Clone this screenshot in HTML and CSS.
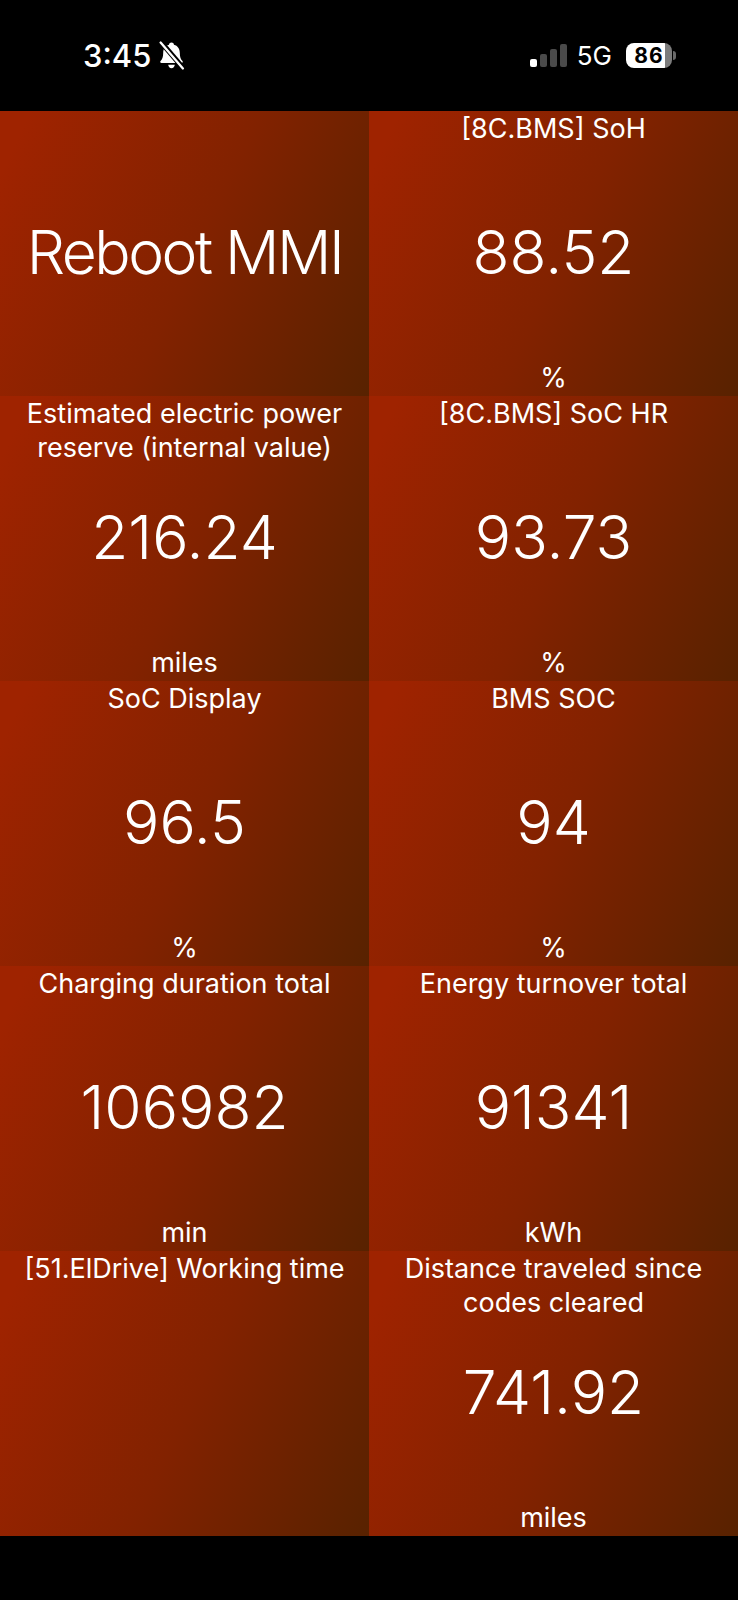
FILE: index.html
```html
<!DOCTYPE html>
<html lang="en">
<head>
    <meta charset="UTF-8">
    <meta name="viewport" content="width=device-width, initial-scale=1.0">
    <title>Dashboard</title>
    <link rel="stylesheet" href="styles.css">
</head>
<body>
    <header class="status-bar">
        <div class="status-left">
            <span class="time">3:45</span>
            <svg class="bell" viewBox="0 0 26 28" width="27" height="29">
                <path fill="#fff" d="M13 1.500c1.300 0 2.200.9 2.400 2 3.600.9 5.600 4 5.600 7.800 0 4.200 1 6.400 2.600 8 .7.8.2 2-.9 2H3.300c-1.100 0-1.600-1.200-.9-2C4 17.700 5 15.500 5 11.300c0-3.800 2-6.900 5.600-7.800.2-1.100 1.100-2 2.400-2zM9.800 23h6.400c-.2 1.900-1.500 3.300-3.200 3.300S10 24.900 9.800 23z"/>
                <path stroke="#000" stroke-width="5" d="M2 0l23 27"/>
                <path stroke="#fff" stroke-width="2.200" stroke-linecap="round" d="M2.500 1.500l21.500 25"/>
            </svg>
        </div>
        <div class="status-right">
            <div class="signal">
                <span class="bar bar-1 on"></span>
                <span class="bar bar-2"></span>
                <span class="bar bar-3"></span>
                <span class="bar bar-4"></span>
            </div>
            <span class="network">5G</span>
            <div class="battery"><span class="battery-level">86</span></div>
            <span class="battery-nub"></span>
        </div>
    </header>

    <main class="grid">
        <div class="tile">
            <div class="label"></div>
            <div class="value big">Reboot MMI</div>
            <div class="unit"></div>
        </div>
        <div class="tile">
            <div class="label">[8C.BMS] SoH</div>
            <div class="value">88.52</div>
            <div class="unit">%</div>
        </div>
        <div class="tile">
            <div class="label">Estimated electric power reserve (internal value)</div>
            <div class="value">216.24</div>
            <div class="unit">miles</div>
        </div>
        <div class="tile">
            <div class="label">[8C.BMS] SoC HR</div>
            <div class="value">93.73</div>
            <div class="unit">%</div>
        </div>
        <div class="tile">
            <div class="label">SoC Display</div>
            <div class="value">96.5</div>
            <div class="unit">%</div>
        </div>
        <div class="tile">
            <div class="label">BMS SOC</div>
            <div class="value">94</div>
            <div class="unit">%</div>
        </div>
        <div class="tile">
            <div class="label">Charging duration total</div>
            <div class="value">106982</div>
            <div class="unit">min</div>
        </div>
        <div class="tile">
            <div class="label">Energy turnover total</div>
            <div class="value">91341</div>
            <div class="unit">kWh</div>
        </div>
        <div class="tile">
            <div class="label">[51.ElDrive] Working time</div>
            <div class="value"></div>
            <div class="unit"></div>
        </div>
        <div class="tile">
            <div class="label">Distance traveled since codes cleared</div>
            <div class="value">741.92</div>
            <div class="unit">miles</div>
        </div>
    </main>
</body>
</html>
```

FILE: styles.css
```css
body {
    margin: 0;
    height: 1600px;
    background-color: #000;
    color: #fff;
    font-family: Inter, Roboto, sans-serif;
    overflow: hidden;
}

.status-bar {
    height: 111px;
    display: flex;
    justify-content: space-between;
    align-items: center;
    padding: 0 62px 1px 83px;
    box-sizing: border-box;
}
.status-left {
    display: flex;
    align-items: center;
    gap: 7px;
}
.time {
    font-size: 31px;
    font-weight: 500;
}
.status-right {
    display: flex;
    align-items: center;
}
.signal {
    display: flex;
    align-items: flex-end;
    gap: 3px;
    height: 23px;
    margin-right: 10px;
}
.bar {
    width: 7px;
    background-color: #4a4a4a;
    border-radius: 2px;
}
.bar.on {
    background-color: #fff;
}
.bar-1 { height: 8px; }
.bar-2 { height: 13px; }
.bar-3 { height: 18px; }
.bar-4 { height: 23px; }
.network {
    font-size: 26px;
    margin-right: 14px;
}
.battery {
    width: 46px;
    height: 25px;
    border-radius: 8px;
    background: linear-gradient(90deg, #fff 85%, #7c7c7c 85%);
    text-align: center;
}
.battery-level {
    color: #000;
    font-size: 21px;
    font-weight: 700;
    letter-spacing: 1px;
    line-height: 25px;
    display: block;
}
.battery-nub {
    width: 3px;
    height: 9px;
    margin-left: 1px;
    background-color: #6a6a6a;
    border-radius: 0 3px 3px 0;
}

.grid {
    display: grid;
    grid-template-columns: 369px 369px;
    grid-auto-rows: 285px;
}
.tile {
    display: grid;
    grid-template-rows: 1fr auto 1fr;
    padding: 1px 8px;
    text-align: center;
    background: linear-gradient(115deg, #9f2300 6%, #822200 52%, #582200 100%);
    font-size: 27px;
    line-height: 33.600px;
}
.value {
    font-size: 60.500px;
    font-weight: 350;
    line-height: 70px;
    margin-bottom: 4px;
}
.value.big {
    letter-spacing: -2.500px;
}
.unit {
    align-self: end;
}
```
